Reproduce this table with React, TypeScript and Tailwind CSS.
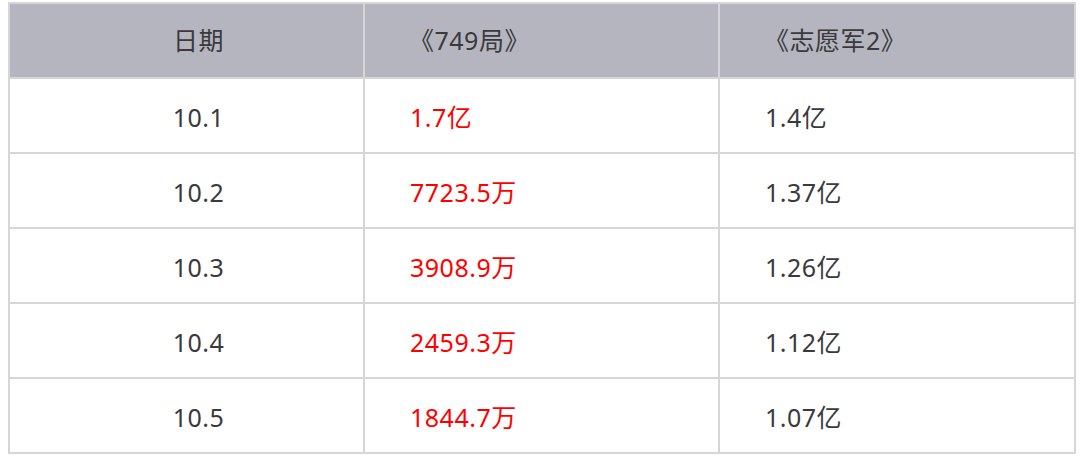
import React from "react";

const rows = [
  ["10.1", "1.7亿", "1.4亿"],
  ["10.2", "7723.5万", "1.37亿"],
  ["10.3", "3908.9万", "1.26亿"],
  ["10.4", "2459.3万", "1.12亿"],
  ["10.5", "1844.7万", "1.07亿"],
];

export default function App() {
  return (
    <div
      className="w-[1080px] h-[457px] bg-white pt-[2px] pl-[8px]"
      style={{ fontFamily: '"Noto Sans", "Noto Sans CJK SC", sans-serif' }}
    >
      <table className="border-collapse table-fixed w-[1066px] text-[25px] tracking-[0.5px] text-[#3a3a3c]">
        <colgroup>
          <col className="w-[355px]" />
          <col className="w-[355px]" />
          <col className="w-[356px]" />
        </colgroup>
        <thead>
          <tr className="h-[75px] bg-[#b5b5bf]">
            <th className="border-2 border-[#d6d6d6] font-normal text-center pl-[24px]">日期</th>
            <th className="border-2 border-[#d6d6d6] font-normal text-left pl-[44px]">《749局》</th>
            <th className="border-2 border-[#d6d6d6] font-normal text-left pl-[44px]">《志愿军2》</th>
          </tr>
        </thead>
        <tbody>
          {rows.map((r) => (
            <tr key={r[0]} className="h-[75px]">
              <td className="border-2 border-[#d6d6d6] text-center pl-[24px] pt-[4px]">{r[0]}</td>
              <td className="border-2 border-[#d6d6d6] text-left pl-[45px] pt-[4px] text-[#ff0000]">{r[1]}</td>
              <td className="border-2 border-[#d6d6d6] text-left pl-[45px] pt-[4px]">{r[2]}</td>
            </tr>
          ))}
        </tbody>
      </table>
    </div>
  );
}
